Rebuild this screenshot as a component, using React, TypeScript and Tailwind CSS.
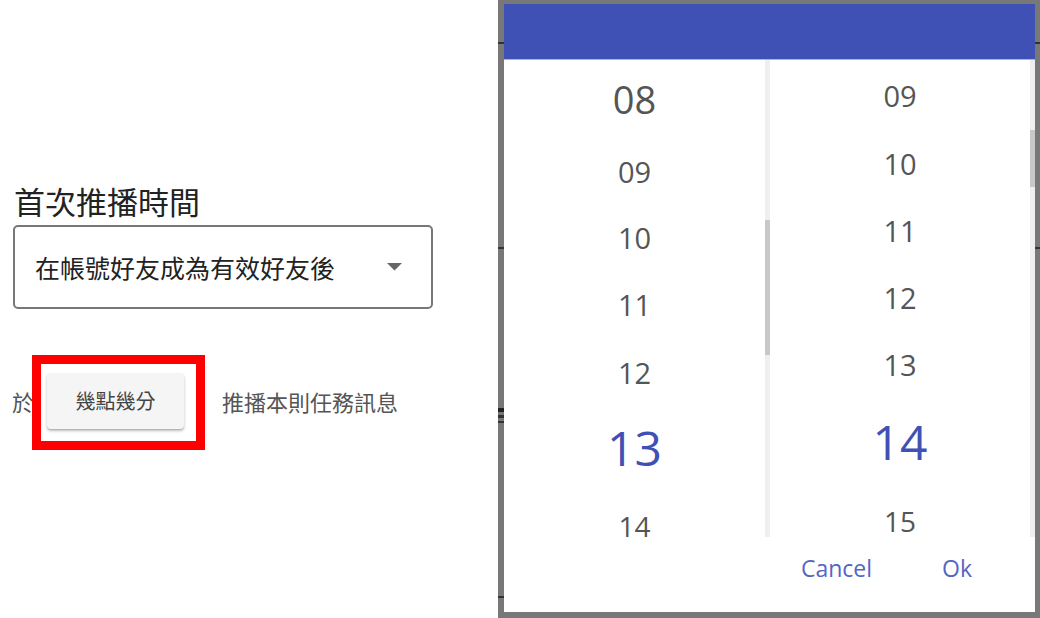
import React from "react";

const cjk = { fontFamily: '"Noto Sans CJK TC", "Noto Sans", sans-serif' };
const num = { fontFamily: '"Open Sans", "Noto Sans", sans-serif' };

type Item = { label: string; row: string; text: string };

const leftItems: Item[] = [
  { label: "08", row: "h-[78px] items-center", text: "text-[38px] leading-none text-[#555]" },
  { label: "09", row: "h-[66px] items-center", text: "text-[29px] leading-none text-[#555]" },
  { label: "10", row: "h-[67px] items-center", text: "text-[29px] leading-none text-[#555]" },
  { label: "11", row: "h-[67px] items-center", text: "text-[29px] leading-none text-[#555]" },
  { label: "12", row: "h-[69px] items-center", text: "text-[29px] leading-none text-[#555]" },
  { label: "13", row: "h-[82px] items-center", text: "text-[48px] leading-none text-[#3f51b5]" },
  { label: "14", row: "h-[48px] items-start pt-[27px]", text: "text-[28px] leading-[20px] text-[#555]" },
];

const rightItems: Item[] = [
  { label: "09", row: "h-[70px] items-center", text: "text-[29px] leading-none text-[#555]" },
  { label: "10", row: "h-[66px] items-center", text: "text-[29px] leading-none text-[#555]" },
  { label: "11", row: "h-[68px] items-center", text: "text-[29px] leading-none text-[#555]" },
  { label: "12", row: "h-[67px] items-center", text: "text-[29px] leading-none text-[#555]" },
  { label: "13", row: "h-[67px] items-center", text: "text-[29px] leading-none text-[#555]" },
  { label: "14", row: "h-[88px] items-center", text: "text-[48px] leading-none text-[#3f51b5]" },
  { label: "15", row: "h-[51px] items-start pt-[25px]", text: "text-[28px] leading-[20px] text-[#555]" },
];

function Column({ items, thumb, width }: { items: Item[]; thumb: string; width: string }) {
  return (
    <div className={`flex h-full ${width}`}>
      <div className="flex-1 flex flex-col">
        {items.map((it) => (
          <div key={it.label} className={`${it.row} flex justify-center shrink-0`}>
            <span className={it.text} style={num}>
              {it.label}
            </span>
          </div>
        ))}
      </div>
      <div className="w-[5px] h-full bg-[#efefef] flex flex-col">
        <div className={thumb} />
      </div>
    </div>
  );
}

export default function App() {
  return (
    <div className="relative w-[1040px] h-[618px] flex bg-white overflow-hidden">
      {/* Left pane */}
      <div className="w-[498px] h-full flex flex-col pt-[181px] pl-[13px]" style={cjk}>
        <div className="h-[40px] leading-[40px] text-[31px] text-[#222] pl-[1px]">首次推播時間</div>
        <div className="mt-[4px] w-[420px] h-[84px] border-2 border-[#777] rounded-[5px] flex items-center justify-between pl-[20px] pr-[29px]">
          <span className="text-[25px] text-[#222] leading-none">在帳號好友成為有效好友後</span>
          <svg width="15" height="8" viewBox="0 0 15 8">
            <polygon points="0,0 15,0 7.5,7.5" fill="#666" />
          </svg>
        </div>
        <div className="mt-[64px] h-[56px] flex items-center -ml-[1px]">
          <span className="text-[22px] text-[#555] leading-none">於</span>
          <button className="ml-[13px] w-[137px] h-[56px] bg-[#f5f5f5] rounded-[4px] shadow-[0_2px_3px_rgba(0,0,0,0.25),0_1px_1px_rgba(0,0,0,0.1)] text-[20px] text-[#444]">
            幾點幾分
          </button>
          <span className="ml-[38px] text-[22px] text-[#555] leading-none">推播本則任務訊息</span>
        </div>
      </div>

      {/* Red annotation box */}
      <div className="absolute left-[32px] top-[355px] w-[173px] h-[95px] border-[9px] border-[#ff0000]" />

      {/* Right pane: dialog over backdrop */}
      <div className="relative flex-1 h-full bg-[#787878] pt-[4px] pl-[6px] pr-[5px] pb-[6px]">
        <span className="absolute left-0 top-[42px] w-[6px] h-[2px] bg-[#333]" />
        <span className="absolute left-0 top-[247px] w-[6px] h-[2px] bg-[#333]" />
        <span className="absolute left-0 top-[408px] w-[6px] h-[4px] bg-[#222]" />
        <span className="absolute left-0 top-[415px] w-[6px] h-[3px] bg-[#333]" />
        <span className="absolute left-0 top-[421px] w-[6px] h-[2px] bg-[#333]" />
        <span className="absolute left-0 top-[596px] w-[6px] h-[2px] bg-[#333]" />
        <span className="absolute right-0 top-[42px] w-[5px] h-[2px] bg-[#333]" />
        <span className="absolute right-0 top-[247px] w-[5px] h-[2px] bg-[#333]" />

        <div className="w-full h-full bg-white flex flex-col">
          <div className="h-[56px] bg-[#3f51b5] border-b border-[#a9b3e8] shrink-0" />
          <div className="h-[477px] flex shrink-0">
            <Column items={leftItems} width="w-[266px]" thumb="mt-[160px] h-[135px] bg-[#c8c8c8]" />
            <Column items={rightItems} width="flex-1" thumb="mt-[70px] h-[57px] bg-[#c8c8c8]" />
          </div>
          <div className="flex-1 flex justify-end items-start pt-[16px] pr-[63px] gap-[70px]" style={num}>
            <span className="text-[23px] leading-[30px] text-[#5566c2]">Cancel</span>
            <span className="text-[23px] leading-[30px] text-[#5566c2]">Ok</span>
          </div>
        </div>
      </div>
    </div>
  );
}
